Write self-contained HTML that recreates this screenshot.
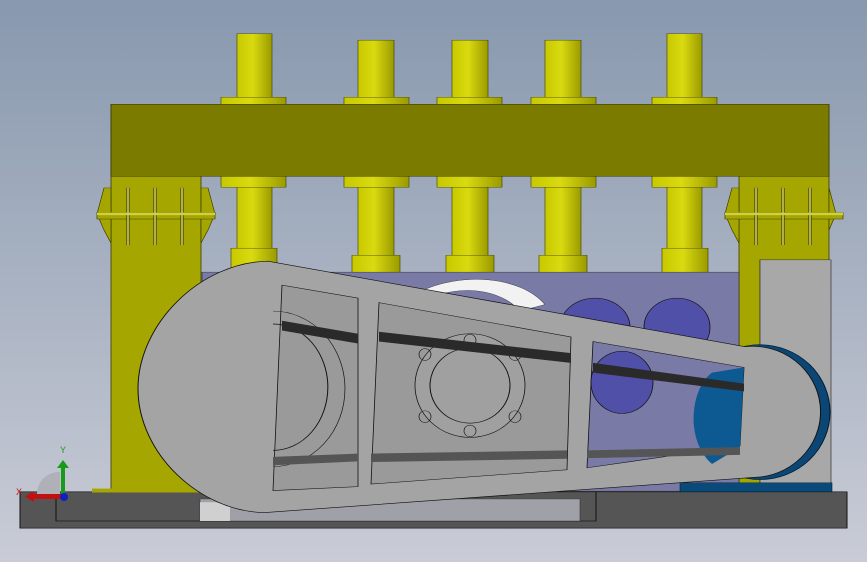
<!DOCTYPE html>
<html><head><style>html,body{margin:0;padding:0;width:867px;height:562px;overflow:hidden}svg{display:block}</style></head>
<body>
<svg width="867" height="562" viewBox="0 0 867 562" xmlns="http://www.w3.org/2000/svg" font-family="Liberation Sans, sans-serif">
<defs>
<linearGradient id="bg" x1="0" y1="0" x2="0" y2="1"><stop offset="0" stop-color="#8898ae"/><stop offset="1" stop-color="#c9ccd6"/></linearGradient>
<linearGradient id="col" x1="0" y1="0" x2="1" y2="0"><stop offset="0" stop-color="#c8c800"/><stop offset="0.45" stop-color="#dada10"/><stop offset="1" stop-color="#9a9a00"/></linearGradient>
</defs>
<rect width="867" height="562" fill="url(#bg)"/>
<g transform="scale(1,0.648)">
<g fill="url(#col)" stroke="#3a3a00" stroke-width="0.6">
<rect x="237" y="52" width="35" height="370"/>
<rect x="358" y="62" width="36" height="360"/>
<rect x="452" y="62" width="36" height="360"/>
<rect x="545" y="62" width="36" height="360"/>
<rect x="667" y="52" width="35" height="370"/>
<rect x="221" y="150" width="65" height="12"/><rect x="344" y="150" width="65" height="12"/><rect x="437" y="150" width="65" height="12"/><rect x="531" y="150" width="65" height="12"/><rect x="652" y="150" width="65" height="12"/>
<rect x="221" y="272" width="65" height="17"/><rect x="344" y="272" width="65" height="17"/><rect x="437" y="272" width="65" height="17"/><rect x="531" y="272" width="65" height="17"/><rect x="652" y="272" width="65" height="17"/>
<rect x="231" y="383" width="46" height="40"/><rect x="352" y="394" width="48" height="28"/><rect x="446" y="394" width="48" height="28"/><rect x="539" y="394" width="48" height="28"/><rect x="662" y="383" width="46" height="40"/>
</g>
<path d="M111 161 H829 V401 H760 V758 H739 V272 H201 V758 H111 Z" fill="#a6a600" stroke="#3a3a00" stroke-width="0.8"/>
<rect x="111" y="161" width="718" height="111" fill="#7b7b00" stroke="#3a3a00" stroke-width="0.8"/>
<g fill="#a6a600" stroke="#3a3a00" stroke-width="0.7">
<path d="M104 290 L111 290 L111 375 L104 355 L97 330 Z"/><path d="M201 290 L208 290 L215 330 L208 355 L201 375Z"/>
<path d="M732 290 L739 290 L739 375 L732 355 L725 330Z"/><path d="M829 290 L836 330 L829 355Z"/>
<rect x="97" y="328" width="118" height="10"/><rect x="725" y="328" width="118" height="10"/>
</g>
<g stroke="#222" stroke-width="3">
<path d="M128 290V378M155 290V378M182 290V378M756 290V378M783 290V378M810 290V378"/></g>
<g stroke="#eeee55" stroke-width="1.4">
<path d="M128 290V378M155 290V378M182 290V378M756 290V378M783 290V378M810 290V378"/></g>
<rect x="97" y="328" width="118" height="4" fill="#d0d040"/><rect x="725" y="328" width="118" height="4" fill="#d0d040"/>
<rect x="760" y="401" width="71" height="358" fill="#a8a8a8" stroke="#333" stroke-width="0.7"/>
<rect x="202" y="420" width="537" height="338" fill="#7a7aa6" stroke="#333" stroke-width="0.7"/>
<g fill="#5050a8" stroke="#111" stroke-width="0.8">
<ellipse cx="595" cy="505" rx="35" ry="45"/><ellipse cx="677" cy="505" rx="33" ry="45"/>
</g>
<path d="M420 450 C460 420 520 425 545 470 L520 480 C500 445 460 440 430 460Z" fill="#f2f2f2" stroke="#333" stroke-width="0.6"/>
<rect x="20" y="759" width="827" height="56" fill="#555" stroke="#111"/>
<rect x="56" y="759" width="540" height="45" fill="#555" stroke="#111"/>
<rect x="92" y="754" width="110" height="6" fill="#a6a600"/>
<rect x="200" y="770" width="380" height="34" fill="#a0a0a8" stroke="#333" stroke-width="0.6"/>
<rect x="200" y="775" width="30" height="29" fill="#d0d0d0"/>
<rect x="680" y="745" width="152" height="14" fill="#0a4a7a" stroke="#022" stroke-width="0.6"/>
<ellipse cx="760" cy="636" rx="70" ry="104" fill="#0b4675" stroke="#021a33" stroke-width="1"/>
<path d="M268 403 L745 535 A68 101 0 0 1 760 736 L265 791 C200 790 138 700 138 600 C138 500 200 405 268 403 Z" fill="#a4a4a4" stroke="#111" stroke-width="1"/>
<g fill="#9a9a9a" stroke="#111" stroke-width="0.8">
<path d="M282 440 L358 460 L358 751 L273 757 Z"/>
<path d="M379 467 L571 520 L567 725 L371 747 Z"/>
<path d="M593 527 L744 567 L740 688 L587 722 Z" fill="#7a7aa6"/>
</g>
<ellipse cx="622" cy="590" rx="31" ry="48" fill="#5050a8" stroke="#111" stroke-width="0.8"/>
<path d="M744 567 L712 575 C690 600 685 680 712 716 L740 690 Z" fill="#0d5a92"/>
<ellipse cx="470" cy="595" rx="55" ry="80" fill="#a0a0a0" stroke="#111" stroke-width="0.8"/>
<ellipse cx="470" cy="595" rx="40" ry="58" fill="none" stroke="#111" stroke-width="1"/>
<g fill="none" stroke="#111" stroke-width="0.7"><ellipse cx="470" cy="525" rx="6" ry="9"/><ellipse cx="470" cy="665" rx="6" ry="9"/><ellipse cx="425" cy="547" rx="6" ry="9"/><ellipse cx="515" cy="547" rx="6" ry="9"/><ellipse cx="425" cy="643" rx="6" ry="9"/><ellipse cx="515" cy="643" rx="6" ry="9"/></g>
<path d="M273 500 A45 80 0 0 1 273 695" fill="none" stroke="#111" stroke-width="1"/>
<path d="M273 480 A60 100 0 0 1 273 720" fill="none" stroke="#111" stroke-width="0.7"/>
<g fill="#2a2a2a">
<path d="M282 495 L358 515 L358 530 L282 510Z"/>
<path d="M379 512 L571 545 L571 560 L379 527Z"/>
<path d="M593 560 L744 592 L744 604 L593 575Z"/>
<path d="M273 705 L358 700 L358 712 L273 718Z" fill="#555"/>
<path d="M371 700 L567 695 L567 708 L371 713Z" fill="#555"/>
<path d="M587 695 L740 690 L740 702 L587 707Z" fill="#555"/>
</g>
</g>
<path d="M37 495 A22 22 0 0 1 60 472 L60 495 Z" fill="#b0b0b8"/>
<rect x="61" y="466" width="4" height="30" fill="#1a9a1a"/><path d="M57 468 L63 460 L69 468Z" fill="#1a9a1a"/>
<rect x="33" y="494" width="30" height="5" fill="#c01010"/><path d="M34 491 L25 496.5 L34 502Z" fill="#c01010"/>
<circle cx="64" cy="497" r="4" fill="#1020c0"/>
<text x="60" y="453" font-size="9" fill="#1a9a1a">Y</text>
<text x="16" y="495" font-size="9" fill="#c01010">X</text>
</svg>
</body></html>
